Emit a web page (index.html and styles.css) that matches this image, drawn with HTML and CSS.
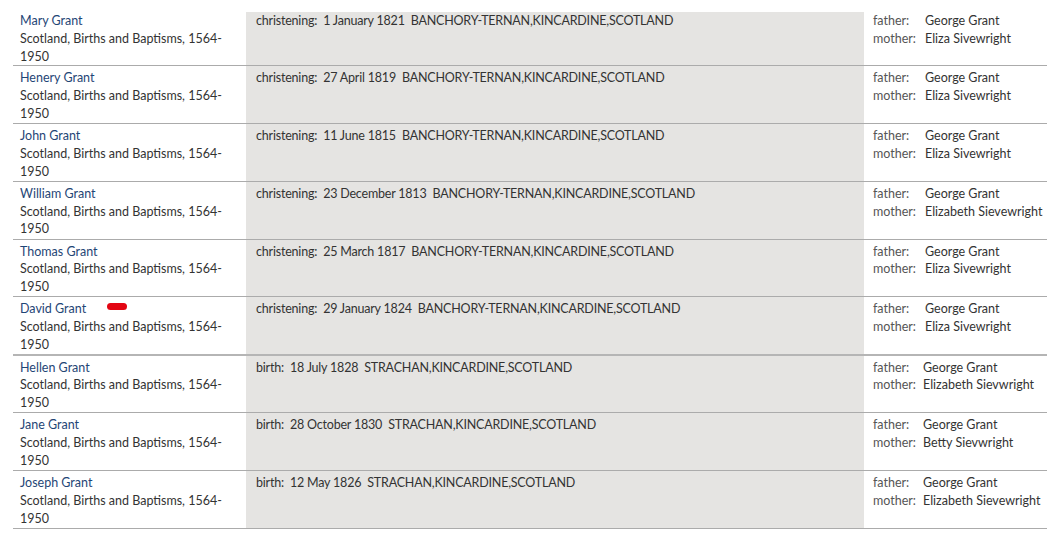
FILE: index.html
```html
<!DOCTYPE html>
<html>
<head>
<meta charset="utf-8">
<link rel="stylesheet" href="styles.css">
</head>
<body>
<div class="records">
  <div class="row">
    <div class="who"><a class="name">Mary Grant</a><div class="coll">Scotland, Births and Baptisms, 1564-<wbr>1950</div></div>
    <div class="event">christening:&nbsp; 1 January 1821&nbsp; BANCHORY-TERNAN,KINCARDINE,SCOTLAND</div>
    <div class="rel"><span class="lbl">father:</span><span>George Grant</span><span class="lbl">mother:</span><span>Eliza Sivewright</span></div>
  </div>
  <div class="row">
    <div class="who"><a class="name">Henery Grant</a><div class="coll">Scotland, Births and Baptisms, 1564-<wbr>1950</div></div>
    <div class="event">christening:&nbsp; 27 April 1819&nbsp; BANCHORY-TERNAN,KINCARDINE,SCOTLAND</div>
    <div class="rel"><span class="lbl">father:</span><span>George Grant</span><span class="lbl">mother:</span><span>Eliza Sivewright</span></div>
  </div>
  <div class="row">
    <div class="who"><a class="name">John Grant</a><div class="coll">Scotland, Births and Baptisms, 1564-<wbr>1950</div></div>
    <div class="event">christening:&nbsp; 11 June 1815&nbsp; BANCHORY-TERNAN,KINCARDINE,SCOTLAND</div>
    <div class="rel"><span class="lbl">father:</span><span>George Grant</span><span class="lbl">mother:</span><span>Eliza Sivewright</span></div>
  </div>
  <div class="row">
    <div class="who"><a class="name">William Grant</a><div class="coll">Scotland, Births and Baptisms, 1564-<wbr>1950</div></div>
    <div class="event">christening:&nbsp; 23 December 1813&nbsp; BANCHORY-TERNAN,KINCARDINE,SCOTLAND</div>
    <div class="rel"><span class="lbl">father:</span><span>George Grant</span><span class="lbl">mother:</span><span>Elizabeth Sievewright</span></div>
  </div>
  <div class="row">
    <div class="who"><a class="name">Thomas Grant</a><div class="coll">Scotland, Births and Baptisms, 1564-<wbr>1950</div></div>
    <div class="event">christening:&nbsp; 25 March 1817&nbsp; BANCHORY-TERNAN,KINCARDINE,SCOTLAND</div>
    <div class="rel"><span class="lbl">father:</span><span>George Grant</span><span class="lbl">mother:</span><span>Eliza Sivewright</span></div>
  </div>
  <div class="row row-seam">
    <div class="who"><a class="name">David Grant</a><span class="mark"></span><div class="coll">Scotland, Births and Baptisms, 1564-<wbr>1950</div></div>
    <div class="event">christening:&nbsp; 29 January 1824&nbsp; BANCHORY-TERNAN,KINCARDINE,SCOTLAND</div>
    <div class="rel"><span class="lbl">father:</span><span>George Grant</span><span class="lbl">mother:</span><span>Eliza Sivewright</span></div>
  </div>
  <div class="row">
    <div class="who"><a class="name">Hellen Grant</a><div class="coll">Scotland, Births and Baptisms, 1564-<wbr>1950</div></div>
    <div class="event">birth:&nbsp; 18 July 1828&nbsp; STRACHAN,KINCARDINE,SCOTLAND</div>
    <div class="rel rel-b"><span class="lbl">father:</span><span>George Grant</span><span class="lbl">mother:</span><span>Elizabeth Sievwright</span></div>
  </div>
  <div class="row">
    <div class="who"><a class="name">Jane Grant</a><div class="coll">Scotland, Births and Baptisms, 1564-<wbr>1950</div></div>
    <div class="event">birth:&nbsp; 28 October 1830&nbsp; STRACHAN,KINCARDINE,SCOTLAND</div>
    <div class="rel rel-b"><span class="lbl">father:</span><span>George Grant</span><span class="lbl">mother:</span><span>Betty Sievwright</span></div>
  </div>
  <div class="row">
    <div class="who"><a class="name">Joseph Grant</a><div class="coll">Scotland, Births and Baptisms, 1564-<wbr>1950</div></div>
    <div class="event">birth:&nbsp; 12 May 1826&nbsp; STRACHAN,KINCARDINE,SCOTLAND</div>
    <div class="rel rel-b"><span class="lbl">father:</span><span>George Grant</span><span class="lbl">mother:</span><span>Elizabeth Sievewright</span></div>
  </div>
</div>
</body>
</html>
```
FILE: styles.css
```css
html, body {
  margin: 0;
  padding: 0;
  background: #ffffff;
}
body {
  font-family: "Lato", "Liberation Sans", sans-serif;
  font-size: 12.5px;
  color: #333333;
}
.records {
  width: 1034px;
  margin: 12px 0 0 13px;
}
.row {
  display: grid;
  grid-template-columns: 233px 618px 1fr;
  border-bottom: 1px solid #ababab;
  line-height: 17.75px;
}
.row > div {
  padding-top: 3px;
  padding-bottom: 0.5px;
}
.row:first-child > div {
  padding-top: 0;
  padding-bottom: 0;
}
.row-seam {
  border-bottom: 2px solid #b5b5b5;
}
.row-seam > div {
  padding-bottom: 0;
}
.who {
  position: relative;
  padding-left: 7px;
  padding-right: 6px;
}
.name {
  color: #1f4676;
  text-decoration: none;
}
.mark {
  position: absolute;
  left: 94px;
  top: 6px;
  width: 20px;
  height: 7px;
  border-radius: 4px;
  background: #e30613;
}
.coll {
  color: #333333;
}
.event {
  background: #e5e4e2;
  padding-left: 10px;
  letter-spacing: -0.2px;
}
.rel {
  padding-left: 9px;
  display: grid;
  grid-template-columns: 52px 1fr;
  align-content: start;
}
.rel-b {
  grid-template-columns: 50px 1fr;
}
.lbl {
  color: #555555;
}
```
